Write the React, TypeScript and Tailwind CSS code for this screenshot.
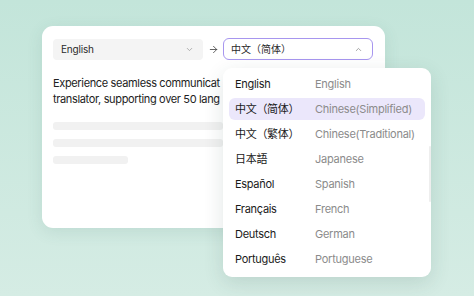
import { ChevronDown, ChevronUp, ArrowRight } from 'lucide-react';

const languages = [
  { native: '中文（简体）', english: 'Chinese(Simplified)', active: true },
  { native: '中文（繁体）', english: 'Chinese(Traditional)' },
  { native: '日本語', english: 'Japanese' },
  { native: 'Español', english: 'Spanish' },
  { native: 'Français', english: 'French' },
  { native: 'Deutsch', english: 'German' },
  { native: 'Português', english: 'Portuguese' },
];

const font = { fontFamily: 'Inter, "Noto Sans CJK SC", sans-serif' };

export default function App() {
  return (
    <div
      className="w-[474px] h-[296px] overflow-hidden bg-gradient-to-b from-[#c3e5da] to-[#d5ece4] pt-[26px] pl-[42px]"
      style={font}
    >
      <div className="relative w-[343px] h-[202px] rounded-[11px] bg-white shadow-[0_4px_16px_rgba(60,110,95,0.12)] pt-[12px] px-[11px]">
        <div className="flex items-center">
          <div className="w-[150px] h-[21px] rounded-[4px] bg-[#f4f4f4] flex items-center justify-between pl-[8px] pr-[9px]">
            <span className="text-[10px] tracking-[-0.2px] text-[#2a2a2a]">English</span>
            <ChevronDown className="w-[9px] h-[9px] text-[#9a9a9a]" strokeWidth={2} />
          </div>
          <div className="w-[20px] flex justify-center">
            <ArrowRight className="w-[11px] h-[11px] text-[#444]" strokeWidth={1.8} />
          </div>
          <div className="w-[150px] h-[22px] rounded-[6px] border-[1.5px] border-[#a796ef] flex items-center justify-between pl-[7px] pr-[9px]">
            <span className="text-[10px] text-[#2a2a2a]">中文（简体）</span>
            <ChevronUp className="w-[9px] h-[9px] text-[#8a8a8a]" strokeWidth={2} />
          </div>
        </div>

        <p className="mt-[15px] text-[11px] tracking-[-0.35px] leading-[16px] text-[#222]">
          Experience seamless communicat
          <br />
          translator, supporting over 50 lang
        </p>

        <div className="mt-[15px] flex flex-col gap-[9px]">
          <div className="w-[170px] h-[8px] rounded-[3px] bg-[#f1f1f1]" />
          <div className="w-[170px] h-[8px] rounded-[3px] bg-[#f1f1f1]" />
          <div className="w-[75px] h-[8px] rounded-[3px] bg-[#f1f1f1]" />
        </div>

        <div className="absolute left-[181px] top-[42px] w-[208px] h-[209px] rounded-[9px] bg-white shadow-[0_6px_20px_rgba(40,80,70,0.14)] pt-[5px] px-[6px] flex flex-col gap-[3px]">
          <div className="h-[22px] flex items-center px-[6px]">
            <span className="w-[80px] shrink-0 text-[11px] tracking-[-0.3px] text-[#1a1a1a]">English</span>
            <span className="text-[11px] tracking-[-0.25px] whitespace-nowrap text-[#8b8b8b]">English</span>
          </div>
          {languages.map((lang) => (
            <div
              key={lang.native}
              className={`h-[22px] rounded-[6px] flex items-center px-[6px] ${lang.active ? 'bg-[#ebe7fb]' : ''}`}
            >
              <span className="w-[80px] shrink-0 text-[11px] tracking-[-0.3px] text-[#1a1a1a]">{lang.native}</span>
              <span className="text-[11px] tracking-[-0.25px] whitespace-nowrap text-[#8b8b8b]">{lang.english}</span>
            </div>
          ))}
          <div className="absolute right-0 top-[78px] w-[2px] h-[56px] rounded-full bg-[#eeeeee]" />
        </div>
      </div>
    </div>
  );
}
